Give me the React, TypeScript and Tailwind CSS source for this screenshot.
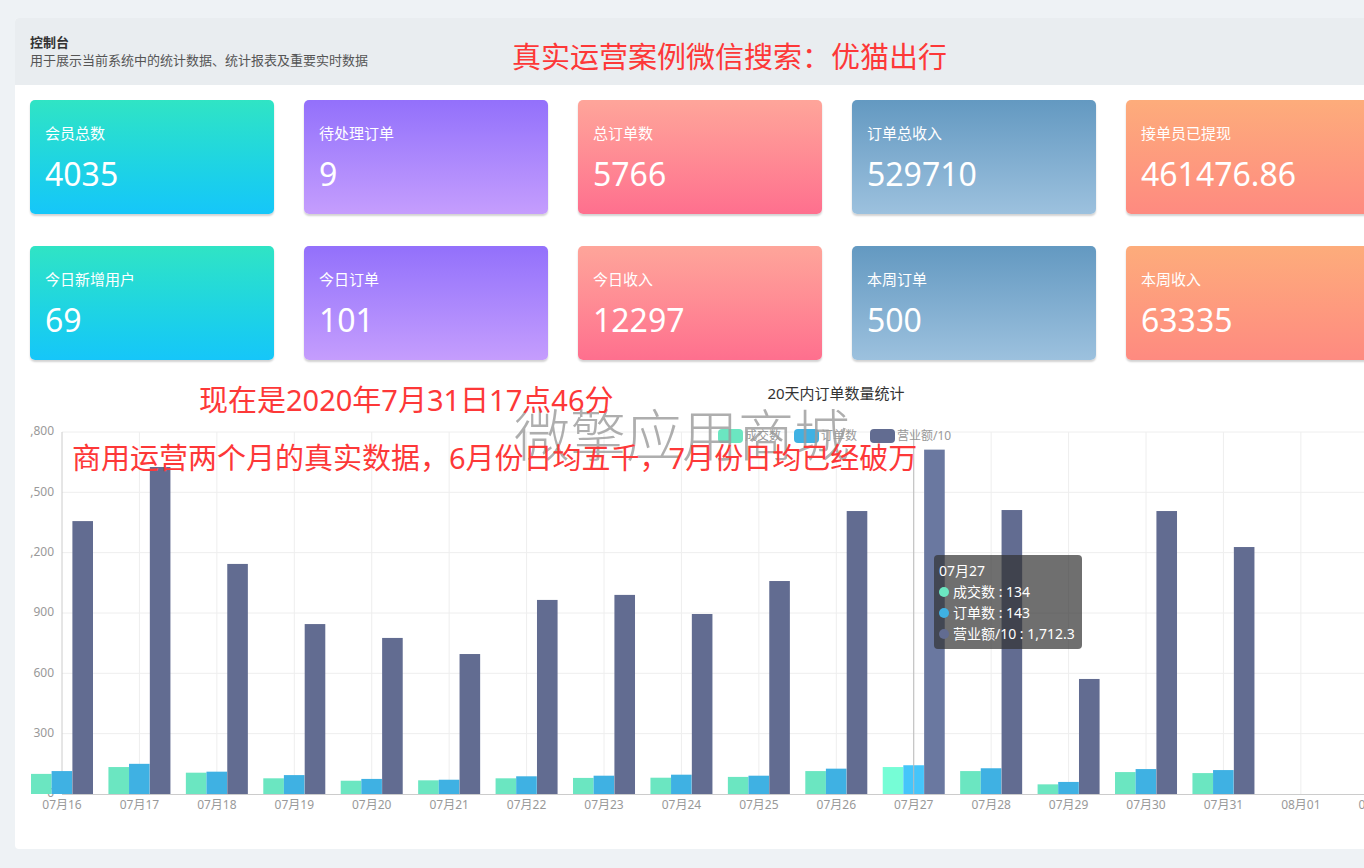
import React from "react";

const CJK = '"Noto Sans", "Noto Sans CJK SC", sans-serif';

const cardsRow1 = [
  { t: "会员总数", v: "4035", g: "bg-gradient-to-b from-[#30e4c4] to-[#16c6f9]" },
  { t: "待处理订单", v: "9", g: "bg-gradient-to-b from-[#9370fb] to-[#c59dfd]" },
  { t: "总订单数", v: "5766", g: "bg-gradient-to-b from-[#fea59a] to-[#fe6f8e]" },
  { t: "订单总收入", v: "529710", g: "bg-gradient-to-b from-[#6399c1] to-[#9cc1de]" },
  { t: "接单员已提现", v: "461476.86", g: "bg-gradient-to-b from-[#fdac7b] to-[#fe8a80]" },
];
const cardsRow2 = [
  { t: "今日新增用户", v: "69", g: "bg-gradient-to-b from-[#30e4c4] to-[#16c6f9]" },
  { t: "今日订单", v: "101", g: "bg-gradient-to-b from-[#9370fb] to-[#c59dfd]" },
  { t: "今日收入", v: "12297", g: "bg-gradient-to-b from-[#fea59a] to-[#fe6f8e]" },
  { t: "本周订单", v: "500", g: "bg-gradient-to-b from-[#6399c1] to-[#9cc1de]" },
  { t: "本周收入", v: "63335", g: "bg-gradient-to-b from-[#fdac7b] to-[#fe8a80]" },
];

const labels = [
  "07月16", "07月17", "07月18", "07月19", "07月20", "07月21", "07月22", "07月23",
  "07月24", "07月25", "07月26", "07月27", "07月28", "07月29", "07月30", "07月31",
  "08月01", "08月02", "08月03",
];
const green = [100, 134, 106, 78, 66, 68, 78, 80, 81, 85, 114, 134, 114, 48, 109, 104];
const blue = [114, 150, 111, 94, 75, 71, 88, 91, 96, 91, 126, 143, 128, 60, 124, 119];
const dark = [1357, 1626, 1144, 845, 776, 696, 965, 990, 895, 1059, 1407, 1712.3, 1412, 572, 1407, 1228];

const Y0 = 419;
const K = 362 / 1800;
const X0 = 47;
const STEP = 77.43;
const BW = 20.6;

function Card({ t, v, g }: { t: string; v: string; g: string }) {
  return (
    <div className={`h-[114px] rounded-[5px] ${g} pl-[15px] pt-[23px] text-white shadow-[0_2px_2px_rgba(0,0,0,0.18)]`}>
      <div className="text-[15px] leading-[20px]" style={{ fontFamily: CJK }}>{t}</div>
      <div className="mt-[11px] text-[32px] leading-[40px]" style={{ fontFamily: CJK }}>{v}</div>
    </div>
  );
}

function Chart() {
  const yTicks = [
    { v: 0, l: "0" },
    { v: 300, l: "300" },
    { v: 600, l: "600" },
    { v: 900, l: "900" },
    { v: 1200, l: ",200" },
    { v: 1500, l: ",500" },
    { v: 1800, l: ",800" },
  ];
  return (
    <svg width="1355" height="474" className="block" style={{ fontFamily: CJK }}>
      {/* title */}
      <text x="821" y="20" textAnchor="middle" dominantBaseline="middle" fontSize="15" fill="#333">
        20天内订单数量统计
      </text>
      {/* grid */}
      {yTicks.slice(1).map((t) => (
        <line key={t.v} x1={X0} x2={1355} y1={Y0 - t.v * K} y2={Y0 - t.v * K} stroke="#eeeeee" strokeWidth="1" />
      ))}
      {labels.map((_, i) =>
        i === 0 ? null : (
          <line key={i} x1={X0 + STEP * i} x2={X0 + STEP * i} y1={57} y2={Y0} stroke="#eeeeee" strokeWidth="1" />
        )
      )}
      {/* y labels */}
      {yTicks.map((t) => (
        <text key={t.v} x="39" y={Y0 - t.v * K} textAnchor="end" dominantBaseline="middle" fontSize="12" fill="#999">
          {t.l}
        </text>
      ))}
      {/* axes */}
      <line x1={X0} x2={X0} y1={57} y2={Y0} stroke="#cccccc" strokeWidth="1" />
      {/* bars */}
      {green.map((_, i) => {
        const c = X0 + STEP * i;
        const hi = i === 11;
        return (
          <g key={i}>
            <rect x={c - 31} y={Y0 - green[i] * K} width={BW} height={green[i] * K} fill={hi ? "#76fdd6" : "#6be6c1"} />
            <rect x={c - 10.4} y={Y0 - blue[i] * K} width={BW} height={blue[i] * K} fill={hi ? "#45c5fa" : "#3fb1e3"} />
            <rect x={c + 10.4} y={Y0 - dark[i] * K} width={BW} height={dark[i] * K} fill={hi ? "#6a78a0" : "#626c91"} />
          </g>
        );
      })}
      <line x1={X0} x2={1355} y1={Y0 + 0.5} y2={Y0 + 0.5} stroke="#cccccc" strokeWidth="1" />
      {/* axis pointer */}
      <line x1={X0 + STEP * 11} x2={X0 + STEP * 11} y1={57} y2={Y0} stroke="#bbbbbb" strokeWidth="1" />
      {/* x labels */}
      {labels.map((l, i) => (
        <text key={l} x={X0 + STEP * i} y={431} textAnchor="middle" dominantBaseline="middle" fontSize="12" fill="#999">
          {l}
        </text>
      ))}
      {/* legend */}
      <rect x="703" y="54" width="25" height="14" rx="4" fill="#6be6c1" />
      <text x="730" y="61.5" dominantBaseline="middle" fontSize="12" fill="#999">成交数</text>
      <rect x="779" y="54" width="25" height="14" rx="4" fill="#3fb1e3" />
      <text x="806" y="61.5" dominantBaseline="middle" fontSize="12" fill="#999">订单数</text>
      <rect x="855" y="54" width="25" height="14" rx="4" fill="#626c91" />
      <text x="882" y="61.5" dominantBaseline="middle" fontSize="12" fill="#999">营业额/10</text>
    </svg>
  );
}

export default function App() {
  return (
    <div className="w-[1364px] h-[868px] overflow-hidden bg-[#eef2f5]" style={{ fontFamily: CJK }}>
      <div className="pt-[18px] pl-[15px]">
        <div className="w-[1370px] rounded-[4px] bg-white overflow-hidden">
          {/* header */}
          <div className="relative h-[67px] bg-[#e9edf0] pl-[15px] pt-[15px]">
            <div className="text-[13px] leading-[18px] font-semibold text-[#333]">控制台</div>
            <div className="text-[13px] leading-[18px] text-[#555]">用于展示当前系统中的统计数据、统计报表及重要实时数据</div>
            <div className="absolute left-[497px] top-[22px] text-[29px] leading-[34px] text-[#fd3838] whitespace-nowrap">
              真实运营案例微信搜索：优猫出行
            </div>
          </div>
          {/* cards */}
          <div className="grid grid-cols-5 gap-x-[30px] gap-y-[32px] px-[15px] pt-[15px]">
            {cardsRow1.map((c) => (
              <Card key={c.t} {...c} />
            ))}
            {cardsRow2.map((c) => (
              <Card key={c.t} {...c} />
            ))}
          </div>
          {/* chart */}
          <div className="relative mt-[15px] h-[474px]">
            <Chart />
            <div className="absolute left-[499px] top-[29px] text-[56px] leading-[60px] font-light text-[#9a9a9a]/80 whitespace-nowrap">
              微擎应用商城
            </div>
            <div className="absolute left-[184px] top-[8px] text-[29px] leading-[34px] text-[#fd3838] whitespace-nowrap">
              现在是2020年7月31日17点46分
            </div>
            <div className="absolute left-[57px] top-[66px] text-[29px] leading-[34px] text-[#fd3838] whitespace-nowrap">
              商用运营两个月的真实数据，6月份日均五千，7月份日均已经破万
            </div>
            <div className="absolute left-[919px] top-[180px] w-[148px] h-[94px] rounded-[4px] bg-[rgba(50,50,50,0.7)] pl-[5px] pt-[5px] text-[14px] leading-[21px] text-white">
              <div>07月27</div>
              <div className="flex items-center">
                <span className="mr-[4px] inline-block h-[10px] w-[10px] rounded-full bg-[#6be6c1]" />
                成交数 : 134
              </div>
              <div className="flex items-center">
                <span className="mr-[4px] inline-block h-[10px] w-[10px] rounded-full bg-[#3fb1e3]" />
                订单数 : 143
              </div>
              <div className="flex items-center whitespace-nowrap">
                <span className="mr-[4px] inline-block h-[10px] w-[10px] rounded-full bg-[#626c91]" />
                营业额/10 : 1,712.3
              </div>
            </div>
          </div>
        </div>
      </div>
    </div>
  );
}
